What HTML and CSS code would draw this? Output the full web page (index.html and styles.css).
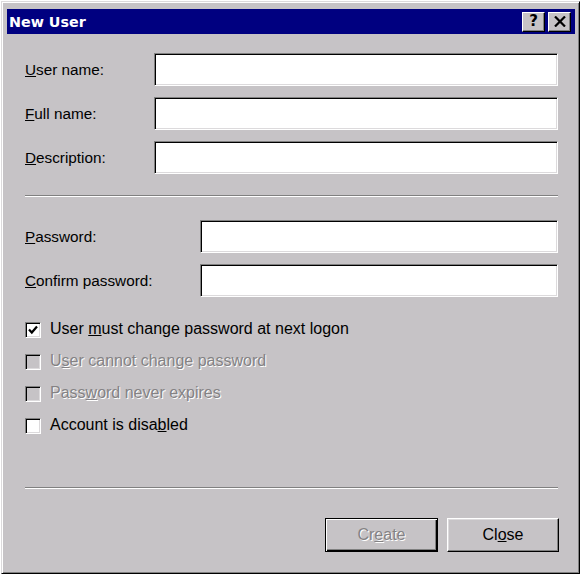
FILE: index.html
```html
<!DOCTYPE html>
<html>
<head>
<meta charset="utf-8">
<link rel="stylesheet" href="styles.css">
</head>
<body>
<div class="window">
  <div class="titlebar">
    <span class="title">New User</span>
    <div class="tbtns">
      <div class="tbtn"><span class="q">?</span></div>
      <div class="tbtn">
        <svg width="12" height="11" viewBox="0 0 12 11"><path d="M1 0.5 L11 10.5 M11 0.5 L1 10.5" stroke="#000" stroke-width="2.2" fill="none"/></svg>
      </div>
    </div>
  </div>
  <div class="content">
    <div class="grid grid1">
      <label class="lbl"><u>U</u>ser name:</label><div class="input"></div>
      <label class="lbl"><u>F</u>ull name:</label><div class="input"></div>
      <label class="lbl"><u>D</u>escription:</label><div class="input"></div>
    </div>
    <div class="sep sep1"></div>
    <div class="grid grid2">
      <label class="lbl"><u>P</u>assword:</label><div class="input"></div>
      <label class="lbl"><u>C</u>onfirm password:</label><div class="input"></div>
    </div>
    <div class="checks">
      <div class="check">
        <span class="box">
          <svg width="10" height="10" viewBox="0 0 10 10"><path d="M1 4.5 L3.8 7.5 L9 1.5" stroke="#000" stroke-width="2.2" fill="none"/></svg>
        </span>
        <span class="ctext">User <u>m</u>ust change password at next logon</span>
      </div>
      <div class="check disabled">
        <span class="box"></span>
        <span class="ctext">U<u>s</u>er cannot change password</span>
      </div>
      <div class="check disabled">
        <span class="box"></span>
        <span class="ctext">Pass<u>w</u>ord never expires</span>
      </div>
      <div class="check">
        <span class="box"></span>
        <span class="ctext">Account is disa<u>b</u>led</span>
      </div>
    </div>
    <div class="sep sep2"></div>
    <div class="buttons">
      <div class="btn default disabled"><span class="btext">Cr<u>e</u>ate</span></div>
      <div class="btn"><span class="btext">Cl<u>o</u>se</span></div>
    </div>
  </div>
</div>
</body>
</html>
```

FILE: styles.css
```css
html, body {
  margin: 0;
  padding: 0;
  background: #ffffff;
}
body {
  width: 584px;
  height: 576px;
  padding: 1px 4px 2px 1px;
  box-sizing: border-box;
  font-family: "Liberation Sans", Arial, sans-serif;
  font-size: 15.3px;
  color: #000;
}
.window {
  box-sizing: border-box;
  width: 579px;
  height: 573px;
  background: #c6c3c6;
  border: 1px solid;
  border-color: #dcdadc #000000 #000000 #dcdadc;
  box-shadow: inset 1px 1px 0 #ffffff, inset -1px -1px 0 #808080;
  padding: 7px 4px 3px 5px;
  display: flex;
  flex-direction: column;
}
.titlebar {
  height: 25px;
  background: #000080;
  display: flex;
  align-items: center;
  justify-content: space-between;
  padding-left: 2px;
}
.title {
  color: #fff;
  font-family: "DejaVu Sans", Verdana, sans-serif;
  font-weight: bold;
  font-size: 14.3px;
  letter-spacing: 0;
}
.tbtns {
  display: flex;
  gap: 3px;
  margin-right: 4px;
}
.tbtn {
  width: 23px;
  height: 20px;
  box-sizing: border-box;
  background: #c6c3c6;
  border: 1px solid;
  border-color: #ffffff #000000 #000000 #ffffff;
  box-shadow: inset -1px -1px 0 #808080;
  display: flex;
  align-items: center;
  justify-content: center;
}
.q {
  font-family: "DejaVu Sans", sans-serif;
  font-weight: bold;
  font-size: 15px;
  line-height: 1;
}
.content {
  flex: 1;
  padding: 19px 17px 0 18px;
  display: flex;
  flex-direction: column;
}
.grid {
  display: grid;
  row-gap: 11px;
  align-items: center;
}
.grid1 {
  grid-template-columns: 129px 1fr;
}
.grid2 {
  grid-template-columns: 175px 1fr;
}
.lbl {
  line-height: 18px;
}
.input {
  height: 33px;
  box-sizing: border-box;
  background: #fff;
  border: 1px solid;
  border-color: #808080 #ffffff #ffffff #808080;
  box-shadow: inset 1px 1px 0 #000, inset -1px -1px 0 #dcdadc;
}
.sep {
  border-top: 1px solid #808080;
  border-bottom: 1px solid #ffffff;
  height: 0;
}
.sep1 {
  margin: 21px 0 23px 0;
}
.checks {
  margin-top: 16px;
  display: flex;
  flex-direction: column;
  font-size: 16px;
}
.check {
  height: 32px;
  display: flex;
  align-items: center;
}
.box {
  width: 16px;
  height: 16px;
  box-sizing: border-box;
  background: #fff;
  border: 1px solid;
  border-color: #808080 #ffffff #ffffff #808080;
  box-shadow: inset 1px 1px 0 #000, inset -1px -1px 0 #dcdadc;
  display: flex;
  align-items: center;
  justify-content: center;
  margin-right: 9px;
  margin-top: 1px;
}
.check.disabled .box {
  background: #c6c3c6;
}
.check.disabled .ctext, .btn.disabled .btext {
  color: #848284;
  text-shadow: 1px 1px 0 #ffffff;
}
.sep2 {
  margin-top: 46px;
}
.buttons {
  margin-top: 29px;
  display: flex;
  justify-content: flex-end;
  gap: 9px;
  margin-right: -1px;
  font-size: 16px;
}
.btn {
  width: 112px;
  height: 34px;
  box-sizing: border-box;
  border: 1px solid;
  border-color: #ffffff #000000 #000000 #ffffff;
  box-shadow: inset -1px -1px 0 #808080, inset 1px 1px 0 #dcdadc;
  display: flex;
  align-items: center;
  justify-content: center;
}
.btn.default {
  width: 113px;
  border: 1px solid #000;
  box-shadow: inset 1px 1px 0 #ffffff, inset -1px -1px 0 #000, inset -2px -2px 0 #808080;
}
```
